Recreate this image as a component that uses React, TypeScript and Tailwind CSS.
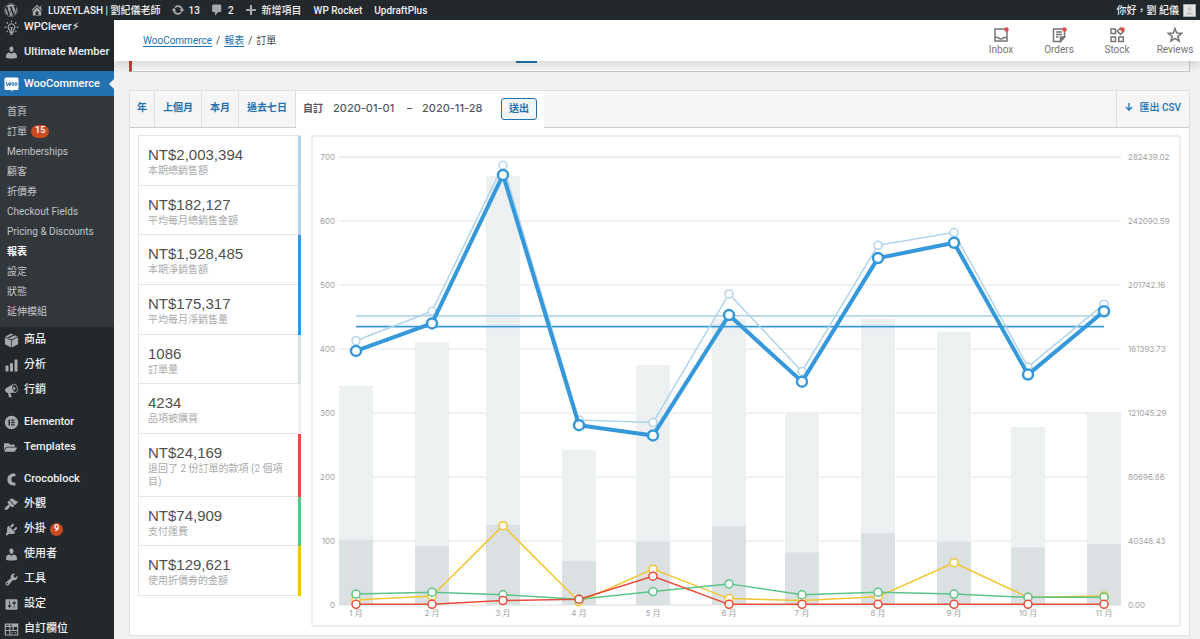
import type { ReactNode } from 'react';
import { clsx } from 'clsx';
import { FaFolderOpen, FaWordpress } from 'react-icons/fa';

const ICONS = {
    home: 'M16 8.5l1.53 1.53-1.06 1.06L10 4.6l-6.47 6.49-1.06-1.06L10 2.5l4 4v-2h2v4zm-6-2.46l6 5.99V18H4v-5.97zM12 17v-5H8v5h4z',
    update: 'M10.2 3.28c3.53 0 6.43 2.61 6.92 6h2.08l-3.5 4-3.5-4h2.32c-.45-1.97-2.21-3.45-4.32-3.45-1.45 0-2.73.71-3.54 1.78L4.95 5.66C6.23 4.2 8.11 3.28 10.2 3.28zm-.4 13.44c-3.52 0-6.43-2.61-6.92-6H.8l3.5-4c1.17 1.33 2.33 2.67 3.5 4H5.48c.45 1.97 2.21 3.45 4.32 3.45 1.45 0 2.73-.71 3.54-1.78l1.71 1.95c-1.28 1.46-3.15 2.38-5.25 2.38z',
    comment: 'M5 2h9c1.1 0 2 .9 2 2v7c0 1.1-.9 2-2 2h-2l-5 5v-5H5c-1.1 0-2-.9-2-2V4c0-1.1.9-2 2-2z',
    plus: 'M17 8.500v3h-5.500V17h-3v-5.500H3v-3h5.500V3h3v5.500z',
    user: 'M10 9.25c-2.27 0-2.73-3.44-2.73-3.44C7 4.02 7.82 2 9.97 2c2.16 0 2.98 2.02 2.71 3.81 0 0-.41 3.44-2.68 3.44zm0 2.57L12.72 10c2.39 0 4.52 2.33 4.52 4.53v2.49s-3.65 1.13-7.24 1.13c-3.65 0-7.24-1.13-7.24-1.13v-2.49c0-2.25 1.94-4.48 4.47-4.48z',
    box: 'M9.600 .8l3 1.300-7.400 3.400v2.800l2 .9V6.400l7.500-3.400 3.500 1.600L10 8.600 1.800 4.600zM1.200 5.600l8.300 4V19.200l-8.300-4.200zM18.800 5.600l-8.300 4V19.200l8.300-4.200z',
    bars: 'M18 18V2h-4v16h4zm-6 0V7H8v11h4zm-6 0v-8H2v8h4z',
    megaphone: 'M18.15 5.94c.46 1.62.38 3.22-.02 4.48-.42 1.28-1.26 2.18-2.3 2.48-.16.06-.26.06-.4.06-.06.02-.12.02-.18.02-.06.02-.14.02-.22.02h-6.8l2.22 5.5c.02.14-.06.26-.14.34-.08.1-.24.16-.34.16H6.95c-.1 0-.26-.06-.34-.16-.08-.08-.16-.2-.14-.34l-1-5.5H4.25l-.02-.02c-.5.06-1.08-.18-1.54-.62s-.88-1.08-1.06-1.88c-.24-.8-.2-1.56-.02-2.2.18-.62.58-1.08 1.06-1.3l.02-.02 9-5.4c.1-.06.18-.1.24-.16.06-.04.14-.08.24-.12.16-.08.28-.12.5-.18 1.04-.3 2.24.1 3.22.98s1.84 2.24 2.26 3.86zm-2.58 5.98h-.02c.4-.1.74-.34 1.04-.7.58-.7.86-1.76.86-3.04 0-.64-.1-1.3-.28-1.98-.34-1.36-1.02-2.5-1.78-3.24s-1.68-1.1-2.46-.88c-.82.22-1.4.96-1.7 2-.32 1.04-.28 2.36.06 3.72.38 1.36 1 2.5 1.8 3.24.78.74 1.62 1.1 2.48.88zm-2.54-7.08c.22-.04.42-.02.62.04.38.16.76.48 1.02 1s.42 1.2.42 1.78c0 .3-.04.56-.12.8-.18.48-.44.84-.86.94-.34.1-.8-.06-1.14-.4s-.64-.86-.78-1.5c-.18-.62-.12-1.24.02-1.72s.48-.84.82-.94z',
    elementor: 'M10 1a9 9 0 100 18 9 9 0 000-18zM6 6h2v8H6zm3.5 0H14v1.7H9.500zm0 3.150H14v1.700H9.500zm0 3.150H14V14H9.500z',
    croco: 'M15.500 2.500C9.500 .8 4.500 4.500 4.500 10s5 9.200 11 7.500l-.5-3.500c-3 .8-5.200-1-5.200-4s2.200-4.800 5.200-4z',
    brush: 'M14.48 11.06L7.41 3.99l1.5-1.5c.5-.56 2.3-.47 3.51.32 1.21.8 1.43 1.28 2.91 2.1 1.18.64 2.45 1.26 4.45.85zm-.71.71L6.7 4.7 4.93 6.47c-.39.39-.39 1.02 0 1.41l1.06 1.06c.39.39.39 1.03 0 1.42-.6.6-1.43 1.11-2.21 1.69-.35.26-.7.53-1.01.84C1.43 14.23.4 16.08 1.4 17.07c.99 1 2.84-.03 4.18-1.36.31-.31.58-.66.85-1.02.57-.78 1.08-1.61 1.69-2.21.39-.39 1.02-.39 1.41 0l1.06 1.06c.39.39 1.02.39 1.41 0z',
    plug: 'M13.11 4.36L9.87 7.6 8 5.73l3.24-3.24c.35-.34 1.05-.2 1.56.32.52.51.66 1.21.31 1.55zm-8 1.77l.91-1.12 9.01 9.01-1.19.84c-.71.71-2.63 1.16-3.82 1.16H6.14L4.9 17.26c-.59.59-1.54.59-2.12 0-.59-.58-.59-1.53 0-2.12l1.24-1.24v-3.88c0-1.13.4-3.19 1.09-3.89zm7.26 3.97l3.24-3.24c.34-.35 1.04-.21 1.55.31.52.51.66 1.21.31 1.55l-3.24 3.25z',
    wrench: 'M16.68 9.77c-1.34 1.34-3.3 1.67-4.95.99l-5.41 6.52c-.99.99-2.59.99-3.58 0s-.99-2.59 0-3.57l6.52-5.42c-.68-1.65-.35-3.61.99-4.95 1.28-1.28 3.12-1.62 4.72-1.06l-2.89 2.89 2.82 2.82 2.86-2.87c.53 1.58.18 3.39-1.08 4.65zM3.81 16.21c.4.39 1.04.39 1.43 0 .4-.4.4-1.04 0-1.43-.39-.4-1.03-.4-1.43 0-.39.39-.39 1.03 0 1.43z',
    sliders: 'M18 16V4c0-.55-.45-1-1-1H3c-.55 0-1 .45-1 1v12c0 .55.45 1 1 1h14c.55 0 1-.45 1-1zM8 11h1c.55 0 1 .45 1 1s-.45 1-1 1H8v1.5c0 .28-.22.5-.5.5s-.5-.22-.5-.5V13H6c-.55 0-1-.45-1-1s.45-1 1-1h1V5.5c0-.28.22-.5.5-.5s.5.22.5.5V11zm5-2h-1c-.55 0-1-.45-1-1s.45-1 1-1h1V5.5c0-.28.22-.5.5-.5s.5.22.5.5V7h1c.55 0 1 .45 1 1s-.45 1-1 1h-1v5.5c0 .28-.22.5-.5.5s-.5-.22-.5-.5V9z',
    fields: 'M1 2h18v16H1zm1.500 4.500v4h4.500v-4zm6 0v4h3v-4zm4.500 0v4h4.500v-4zm-10.500 5.500v4.500h4.500V12zm6 0v4.500h9V12zM3 3.500V5h3V3.500zm5 0V5h3V3.500zm2 10V15h2v-1.500zm4 0V15h2v-1.500z',
};

function Icon({ name, className }: { name: keyof typeof ICONS; className?: string }) {
    return (
        <svg viewBox="0 0 20 20" fill="currentColor" fillRule="evenodd" className={clsx('shrink-0', className)} aria-hidden="true">
            <path d={ICONS[name]} />
        </svg>
    );
}

function BulbIcon() {
    return (
        <svg viewBox="0 0 20 20" className="size-[15px] shrink-0" fill="none" stroke="currentColor" strokeWidth="1.500" aria-hidden="true">
            <path d="M10 .5v2.500M3.500 3l1.800 1.800M16.500 3l-1.800 1.800M.5 9.500H3M17 9.500h2.500M3.500 16l1.500-1.500M16.500 16L15 14.500" />
            <path d="M10 5a4.500 4.500 0 00-2.500 8.200V15h5v-1.800A4.500 4.500 0 0010 5zM8.500 9.500l1.500 1.500 1.500-1.500M10 11v3" />
            <path d="M7.500 16.800h5M8.500 19h3" strokeWidth="1.800" />
        </svg>
    );
}

function WooIcon() {
    return (
        <svg viewBox="0 0 15 15" className="size-[15px] shrink-0" aria-hidden="true">
            <path d="M2 .5h11a1.500 1.500 0 011.500 1.500v9.500A1.500 1.500 0 0113 13H9l-1.500 1.500L7 13H2A1.500 1.500 0 01.5 11.500V2A1.500 1.500 0 012 .5z" fill="#fff" />
            <path d="M2.300 5l1 4L5 5.800 5.700 9l1.300-4" fill="none" stroke="#2271b1" strokeWidth="1" />
            <ellipse cx="9" cy="7" rx="1" ry="1.600" fill="none" stroke="#2271b1" strokeWidth="0.900" />
            <ellipse cx="12" cy="7" rx="1" ry="1.600" fill="none" stroke="#2271b1" strokeWidth="0.900" />
        </svg>
    );
}

const dash = (name: keyof typeof ICONS) => <Icon name={name} className="size-[15px]" />;

interface MenuEntry {
    label: string;
    icon: ReactNode;
    count?: number;
}

const TOP_MENU: MenuEntry[] = [
    { label: 'WPClever⚡︎', icon: <BulbIcon /> },
    { label: 'Ultimate Member', icon: dash('user') },
];

const SUBMENU = ['首頁', '訂單', 'Memberships', '顧客', '折價券', 'Checkout Fields', 'Pricing & Discounts', '報表', '設定', '狀態', '延伸模組'];

const MENU_GROUPS: MenuEntry[][] = [
    [
        { label: '商品', icon: dash('box') },
        { label: '分析', icon: dash('bars') },
        { label: '行銷', icon: dash('megaphone') },
    ],
    [
        { label: 'Elementor', icon: dash('elementor') },
        { label: 'Templates', icon: <FaFolderOpen size={13} /> },
    ],
    [
        { label: 'Crocoblock', icon: dash('croco') },
        { label: '外觀', icon: dash('brush') },
        { label: '外掛', icon: dash('plug'), count: 9 },
        { label: '使用者', icon: dash('user') },
        { label: '工具', icon: dash('wrench') },
        { label: '設定', icon: dash('sliders') },
        { label: '自訂欄位', icon: dash('fields') },
    ],
];

function Badge({ children }: { children: ReactNode }) {
    return (
        <span className="flex h-[13px] min-w-[13px] items-center justify-center rounded-full bg-[#ca4a1f] px-1 text-[9px] font-semibold text-white">
            {children}
        </span>
    );
}

function MenuItem({ label, icon, count }: MenuEntry) {
    return (
        <li>
            <a href="#" className="flex h-[25px] items-center gap-1 pt-px pl-1 text-[11px] font-medium whitespace-nowrap text-[#f0f0f1]">
                <span className="flex w-4 shrink-0 text-[#a7aaad]">{icon}</span>
                {label}
                {count && <Badge>{count}</Badge>}
            </a>
        </li>
    );
}

function Sidebar() {
    return (
        <nav className="-mt-1.5 w-[114px] shrink-0 bg-[#23282d]" aria-label="Main menu">
            <ul className="pb-2">
                {TOP_MENU.map((m) => <MenuItem key={m.label} {...m} />)}
                <li className="mt-[7px]">
                    <a href="#" className="relative flex h-[25px] items-center gap-1 bg-[#2271b1] pt-px pl-1 text-[11px] font-medium text-white">
                        <span className="w-4 shrink-0"><WooIcon /></span>
                        WooCommerce
                        <span className="absolute top-2 right-0 border-y-[5px] border-r-[5px] border-y-transparent border-r-[#f0f0f1]" />
                    </a>
                    <ul className="bg-[#32373c] pt-[5px] pb-1.5">
                        {SUBMENU.map((label) => (
                            <li key={label}>
                                <a
                                    href="#"
                                    className={clsx(
                                        'flex h-5 items-center gap-1 pl-[7px] text-[10px] whitespace-nowrap',
                                        label === '報表' ? 'font-bold text-white' : 'text-[#c3c4c7]'
                                    )}
                                >
                                    {label}
                                    {label === '訂單' && <Badge>15</Badge>}
                                </a>
                            </li>
                        ))}
                    </ul>
                </li>
                {MENU_GROUPS.map((group, i) => (
                    <li key={i} className={clsx(i > 0 && 'mt-[7px]')}>
                        <ul>{group.map((m) => <MenuItem key={m.label} {...m} />)}</ul>
                    </li>
                ))}
            </ul>
        </nav>
    );
}

function AdminBar() {
    return (
        <header className="relative z-20 flex h-5 items-center bg-[#23282d] pr-1 pl-1 text-[10px] font-medium whitespace-nowrap text-[#f0f0f1]">
            <a href="#" aria-label="WordPress" className="text-[#a7aaad]"><FaWordpress size={14} /></a>
            <a href="#" className="ml-3 flex items-center gap-1">
                <Icon name="home" className="size-3.5 text-[#a7aaad]" />
                LUXEYLASH | 劉紀儀老師
            </a>
            <a href="#" className="ml-2.5 flex items-center gap-1">
                <Icon name="update" className="size-3.5 text-[#a7aaad]" />
                13
            </a>
            <a href="#" className="ml-2.5 flex items-center gap-1">
                <Icon name="comment" className="size-3.5 text-[#a7aaad]" />
                2
            </a>
            <a href="#" className="ml-2.5 flex items-center gap-1">
                <Icon name="plus" className="size-3.5 text-[#a7aaad]" />
                新增項目
            </a>
            <a href="#" className="ml-3">WP Rocket</a>
            <a href="#" className="ml-3">UpdraftPlus</a>
            <a href="#" className="ml-auto flex items-center gap-1">
                你好，劉 紀儀
                <svg viewBox="0 0 13 13" className="size-[13px]" aria-hidden="true">
                    <path fill="#e4e4e4" stroke="#a7aaad" d="M.5.5h12v12H.5z" />
                    <circle cx="6.500" cy="5" r="2" fill="#c3c4c7" />
                    <path d="M3 11c0-4 7-4 7 0z" fill="#c3c4c7" />
                </svg>
            </a>
        </header>
    );
}

const ACTIVITY: { label: string; unread: boolean; drawing: ReactNode }[] = [
    {
        label: 'Inbox',
        unread: true,
        drawing: <path d="M2 2h12v12H2zM2 10.500h3.500c.5 2 4.500 2 5 0H14" />,
    },
    {
        label: 'Orders',
        unread: true,
        drawing: (
            <>
                <path d="M2.500 2h11v8L9.500 14.500h-7zM5 5h6M5 7.500h6M5 10h2.500" />
                <path d="M9.500 14.500V10h4z" fill="currentColor" />
            </>
        ),
    },
    {
        label: 'Stock',
        unread: true,
        drawing: <path d="M2 2h4.500v4.500H2zM2 10h4.500v4.500H2zM9.800 10h4.500v4.500H9.800zM11.500 1l3.200 3.200-3.200 3.200-3.200-3.200z" />,
    },
    {
        label: 'Reviews',
        unread: false,
        drawing: <path d="M8 1.500l1.700 4.600 4.900.2-3.800 3 1.300 4.700L8 11.300 3.900 14l1.300-4.700-3.800-3 4.900-.2z" />,
    },
];

function PageHeader() {
    return (
        <div className="relative z-10 flex h-[41px] items-center bg-white pl-[29px] shadow-[0_4px_8px_rgba(0,0,0,0.12)]">
            <nav className="flex gap-1 text-[10px] text-[#3c434a]" aria-label="Breadcrumb">
                <a href="#" className="text-[#2271b1] underline underline-offset-2">WooCommerce</a>
                <span>/</span>
                <a href="#" className="text-[#2271b1] underline underline-offset-2">報表</a>
                <span>/</span>
                <span>訂單</span>
            </nav>
            <div className="-mr-1 ml-auto flex pt-0.5">
                {ACTIVITY.map(({ label, unread, drawing }) => (
                    <button key={label} type="button" className="flex w-[58px] flex-col items-center text-[10px] leading-[14px] text-[#757575]">
                        <svg viewBox="0 0 16 16" className="size-4" fill="none" stroke="currentColor" strokeWidth="1.500" aria-hidden="true">
                            {drawing}
                            {unread && <circle cx="13.500" cy="2.500" r="2.200" fill="#d94f4f" stroke="none" />}
                        </svg>
                        {label}
                    </button>
                ))}
            </div>
        </div>
    );
}

const STATS = [
    { value: 'NT$2,003,394', label: '本期總銷售額', color: 'border-r-[#b1d4ea]' },
    { value: 'NT$182,127', label: '平均每月總銷售金額', color: 'border-r-[#b1d4ea]' },
    { value: 'NT$1,928,485', label: '本期淨銷售額', color: 'border-r-[#3498db]' },
    { value: 'NT$175,317', label: '平均每月淨銷售量', color: 'border-r-[#3498db]' },
    { value: '1086', label: '訂單量', color: 'border-r-[#dbe1e3]' },
    { value: '4234', label: '品項被購買', color: 'border-r-[#ecf0f1]' },
    { value: 'NT$24,169', label: '退回了 2 份訂單的款項 (2 個項目)', color: 'border-r-[#e74c3c]' },
    { value: 'NT$74,909', label: '支付運費', color: 'border-r-[#5cc488]' },
    { value: 'NT$129,621', label: '使用折價券的金額', color: 'border-r-[#f1c40f]' },
];

function Legend() {
    return (
        <ul className="flex min-h-[461px] w-[163px] shrink-0 flex-col self-start border-t border-l border-[#e5e5e5]">
            {STATS.map(({ value, label, color }) => (
                <li key={label} className={clsx('flex grow border-r-[3px]', color)}>
                    <div className="flex grow flex-col justify-center border-b border-[#e5e5e5] px-[9px] pt-0.5">
                        <strong className="font-['Liberation_Sans',sans-serif] text-[15px] leading-[18px] font-normal text-[#505050]">{value}</strong>
                        <span className="text-[10px] leading-[13px] text-[#aaa]">{label}</span>
                    </div>
                </li>
            ))}
        </ul>
    );
}

const MONTH_X = [43, 119, 190, 266, 340, 416, 489, 565, 641, 715, 791];
const ITEMS = [342, 411, 670, 242, 375, 447, 300, 447, 427, 278, 301];
const ORDERS = [102, 92, 125, 69, 99, 123, 82, 112, 99, 90, 95];
const RIGHT_AXIS = ['0.00', '40348.43', '80696.86', '121045.29', '161393.73', '201742.16', '242090.59', '282439.02'];

const LINES = [
    { color: '#f1c532', width: 1.5, r: 4, values: [8, 14, 124, 5, 56, 10, 7, 13, 66, 12, 14] },
    { color: '#5cc488', width: 1.5, r: 4, values: [17, 20, 16, 9, 21, 33, 16, 20, 17, 12, 12] },
    { color: '#b1d4ea', width: 1.5, r: 4, values: [413, 459, 687, 289, 285, 486, 365, 562, 582, 372, 470] },
    { color: '#3498db', width: 4, r: 5, values: [397, 440, 672, 281, 265, 453, 349, 542, 566, 360, 459] },
    { color: '#e74c3c', width: 1.5, r: 4, values: [1, 1, 7, 9, 45, 1, 1, 1, 1, 1, 1] },
];

const AVERAGES = [
    { color: '#b1d4ea', value: 452 },
    { color: '#3498db', value: 435 },
];

const yOf = (v: number) => 468 - v * 0.64;

function Chart() {
    return (
        <svg viewBox="0 0 866 488" className="block h-auto w-full font-['Inter','Noto_Sans_CJK_TC',sans-serif]" role="img" aria-label="Sales by month">
            {RIGHT_AXIS.map((amount, i) => (
                <g key={amount} fill="#a3a3a3" fontSize="8">
                    {i === 7 || i === 0 ? (
                        <path d={`M26 ${yOf(i * 100)}H808`} stroke="#eee" strokeWidth="2" />
                    ) : (
                        <path d={`M26 ${yOf(i * 100)}H808`} stroke="#e0e3e5" />
                    )}
                    <text x="22" y={yOf(i * 100) + 3} textAnchor="end">{i * 100}</text>
                    <text x="815" y={yOf(i * 100) + 3}>{amount}</text>
                </g>
            ))}
            {MONTH_X.map((x, i) => (
                <g key={x}>
                    <rect x={x - 17} y={yOf(ITEMS[i])} width="34" height={468 - yOf(ITEMS[i])} fill="#ecf0f1" />
                    <rect x={x - 17} y={yOf(ORDERS[i])} width="34" height={468 - yOf(ORDERS[i])} fill="#dbe1e3" />
                    <text x={x} y="479" textAnchor="middle" fontSize="8" fill="#a3a3a3">{i + 1} 月</text>
                </g>
            ))}
            {AVERAGES.map(({ color, value }) => (
                <g key={color}>
                    <path d={`M43 ${yOf(value) + 1}H791`} stroke={color} strokeWidth="1" opacity="0.300" />
                    <path d={`M43 ${yOf(value)}H791`} stroke={color} strokeWidth="1.500" />
                </g>
            ))}
            {LINES.map(({ color, width, r, values }) => (
                <g key={color} stroke={color} fill="none">
                    <polyline points={values.map((v, i) => `${MONTH_X[i]},${yOf(v)}`).join(' ')} strokeWidth={width} strokeLinejoin="round" />
                    {values.map((v, i) => (
                        <circle key={i} cx={MONTH_X[i]} cy={yOf(v)} r={r} fill="#fff" strokeWidth={width === 4 ? 2.5 : 1.5} />
                    ))}
                </g>
            ))}
        </svg>
    );
}

const RANGES = ['年', '上個月', '本月', '過去七日'];

function ReportTabs() {
    return (
        <div className="flex h-[37px] border-b border-[#ccc] bg-[#f5f5f5] font-['Inter','Noto_Sans_CJK_TC',sans-serif] text-[10px] font-semibold whitespace-nowrap text-[#2271b1]">
            {RANGES.map((label) => (
                <a key={label} href="#" className="flex items-center border-r border-[#dfdfdf] px-2 pb-1 first:px-[7px]">{label}</a>
            ))}
            <form className="-mb-px flex items-center bg-white pr-[7px] pb-0.5 pl-[7px] text-[#50575e]" onSubmit={(e) => e.preventDefault()}>
                <span>自訂</span>
                <input aria-label="Start date" defaultValue="2020-01-01" className="ml-2.5 w-[66px] bg-transparent text-[11px] font-medium outline-none" />
                <span className="mx-2">–</span>
                <input aria-label="End date" defaultValue="2020-11-28" className="ml-0.5 w-[66px] bg-transparent text-[11px] font-medium outline-none" />
                <button type="submit" className="ml-[13px] h-[22px] rounded-[3px] border border-[#2271b1] bg-[#f3f5f6] px-[7px] text-[#2271b1]">送出</button>
            </form>
            <a href="#" className="ml-auto flex items-center gap-1.5 border-l border-[#dfdfdf] px-2 pb-1 font-['Roboto','Noto_Sans_CJK_TC',sans-serif] font-medium">
                <svg viewBox="0 0 8 10" className="h-2.5 w-2" fill="none" stroke="currentColor" strokeWidth="1.300" aria-hidden="true">
                    <path d="M4 1v7M1 5l3 3 3-3" />
                </svg>
                匯出 CSV
            </a>
        </div>
    );
}

export default function App() {
    return (
        <div className="min-h-screen bg-[#f0f0f1] font-['Roboto','Noto_Sans_CJK_TC',sans-serif]">
            <AdminBar />
            <div className="flex">
                <Sidebar />
                <div className="min-w-0 grow">
                    <PageHeader />
                    <main className="pr-2.5 pl-[15px]">
                        <div className="h-[11px] border border-t-0 border-l-[3px] border-[#c3c4c7] border-l-[#d63638] bg-[#f6f7f7] pl-96">
                            <div className="h-0.5 w-[21px] bg-[#2271b1]" />
                        </div>
                        <section className="mt-[18px] border border-[#dfdfdf] bg-white">
                            <ReportTabs />
                            <div className="flex gap-2.5 px-2 pt-[7px] pb-2">
                                <Legend />
                                <div className="min-w-0 grow rounded-[3px] border-2 border-[#eee]">
                                    <Chart />
                                </div>
                            </div>
                        </section>
                    </main>
                </div>
            </div>
        </div>
    );
}
